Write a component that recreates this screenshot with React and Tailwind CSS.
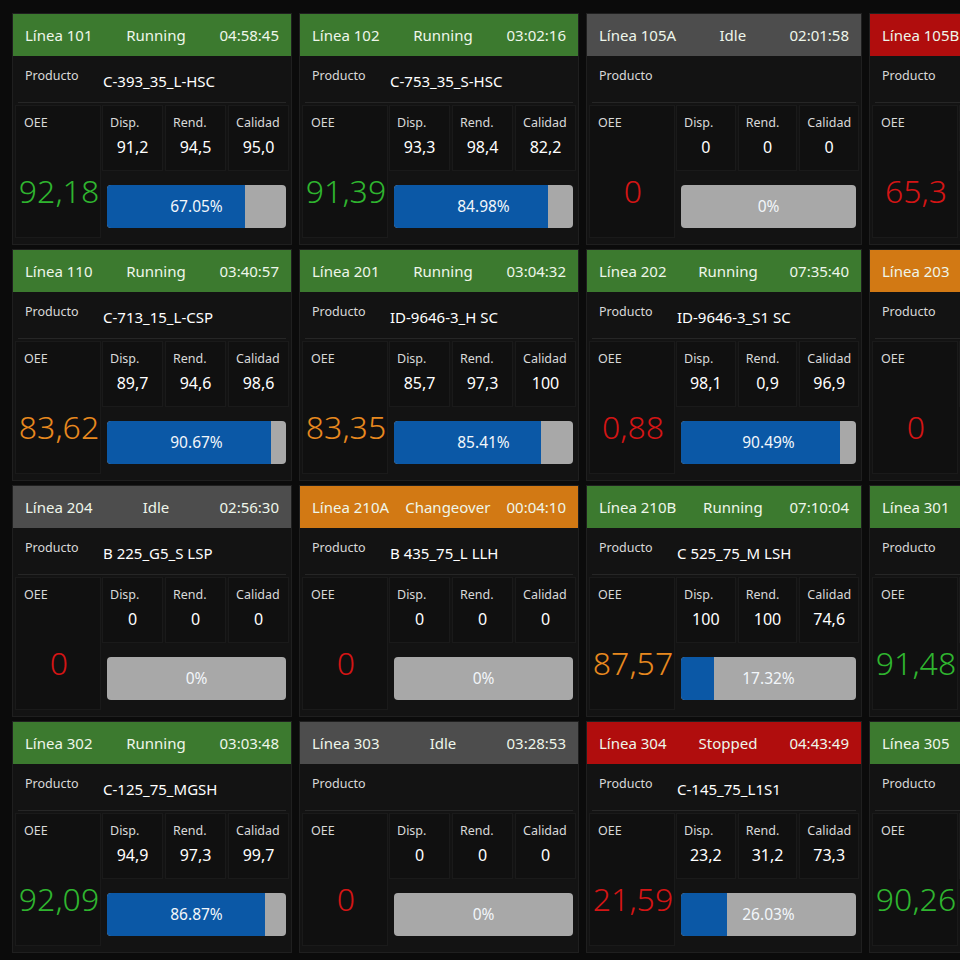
import React from "react";

const HEADER = {
  Running: "bg-[#3c7a2f]",
  Idle: "bg-[#4d4d4d]",
  Changeover: "bg-[#d27914]",
  Stopped: "bg-[#b00d0d]",
};

const OEE_COLOR = {
  green: "text-[#2fb52f]",
  orange: "text-[#e8891f]",
  red: "text-[#d41515]",
};

const lines = [
  { name: "Línea 101", status: "Running", time: "04:58:45", product: "C-393_35_L-HSC", disp: "91,2", rend: "94,5", cal: "95,0", oee: "92,18", color: "green", pct: "67.05%", fill: 0.77 },
  { name: "Línea 102", status: "Running", time: "03:02:16", product: "C-753_35_S-HSC", disp: "93,3", rend: "98,4", cal: "82,2", oee: "91,39", color: "green", pct: "84.98%", fill: 0.86 },
  { name: "Línea 105A", status: "Idle", time: "02:01:58", product: "", disp: "0", rend: "0", cal: "0", oee: "0", color: "red", pct: "0%", fill: 0 },
  { name: "Línea 105B", status: "Stopped", time: "01:12:07", product: "C-210_35_L-HSC", disp: "71,4", rend: "92,3", cal: "99,1", oee: "65,3", color: "red", pct: "48.20%", fill: 0.5 },

  { name: "Línea 110", status: "Running", time: "03:40:57", product: "C-713_15_L-CSP", disp: "89,7", rend: "94,6", cal: "98,6", oee: "83,62", color: "orange", pct: "90.67%", fill: 0.915 },
  { name: "Línea 201", status: "Running", time: "03:04:32", product: "ID-9646-3_H SC", disp: "85,7", rend: "97,3", cal: "100", oee: "83,35", color: "orange", pct: "85.41%", fill: 0.82 },
  { name: "Línea 202", status: "Running", time: "07:35:40", product: "ID-9646-3_S1 SC", disp: "98,1", rend: "0,9", cal: "96,9", oee: "0,88", color: "red", pct: "90.49%", fill: 0.907 },
  { name: "Línea 203", status: "Changeover", time: "00:21:33", product: "B 435_75_L LLH", disp: "0", rend: "0", cal: "0", oee: "0", color: "red", pct: "0%", fill: 0 },

  { name: "Línea 204", status: "Idle", time: "02:56:30", product: "B 225_G5_S LSP", disp: "0", rend: "0", cal: "0", oee: "0", color: "red", pct: "0%", fill: 0 },
  { name: "Línea 210A", status: "Changeover", time: "00:04:10", product: "B 435_75_L LLH", disp: "0", rend: "0", cal: "0", oee: "0", color: "red", pct: "0%", fill: 0 },
  { name: "Línea 210B", status: "Running", time: "07:10:04", product: "C 525_75_M LSH", disp: "100", rend: "100", cal: "74,6", oee: "87,57", color: "orange", pct: "17.32%", fill: 0.19 },
  { name: "Línea 301", status: "Running", time: "05:44:12", product: "C-125_75_MGSH", disp: "96,2", rend: "97,1", cal: "98,0", oee: "91,48", color: "green", pct: "72.10%", fill: 0.75 },

  { name: "Línea 302", status: "Running", time: "03:03:48", product: "C-125_75_MGSH", disp: "94,9", rend: "97,3", cal: "99,7", oee: "92,09", color: "green", pct: "86.87%", fill: 0.88 },
  { name: "Línea 303", status: "Idle", time: "03:28:53", product: "", disp: "0", rend: "0", cal: "0", oee: "0", color: "red", pct: "0%", fill: 0 },
  { name: "Línea 304", status: "Stopped", time: "04:43:49", product: "C-145_75_L1S1", disp: "23,2", rend: "31,2", cal: "73,3", oee: "21,59", color: "red", pct: "26.03%", fill: 0.26 },
  { name: "Línea 305", status: "Running", time: "06:02:19", product: "(C-145_75_L1S1)", disp: "93,0", rend: "97,8", cal: "99,5", oee: "90,26", color: "green", pct: "80.40%", fill: 0.82 },
];

function Metric({ label, value }) {
  return (
    <div className="flex-1 h-[66px] bg-[#101010] border border-[#1a1a1a] pt-[9px] pl-[7px] pr-[3px]">
      <div className="text-[12.5px] leading-[16px] text-[#d9d9d9] whitespace-nowrap">{label}</div>
      <div className="text-[16px] leading-[22px] text-white text-center mt-[5px] pr-[4px]">{value}</div>
    </div>
  );
}

function LineCard({ line }) {
  return (
    <div className="h-[232px] flex flex-col bg-[#131313] border border-[#1f1f1f]">
      {/* Header */}
      <div
        className={`h-[42px] shrink-0 flex items-center justify-between px-[12px] text-[15px] text-[#eef6ea] whitespace-nowrap ${HEADER[line.status]}`}
      >
        <span>{line.name}</span>
        <span>{line.status}</span>
        <span>{line.time}</span>
      </div>

      <div className="flex-1 flex flex-col px-[2px] pb-[6px]">
        {/* Product */}
        <div className="h-[47px] mx-[3px] flex border-b border-[#262626]">
          <div className="w-[85px] shrink-0 pl-[7px] pt-[11px] text-[12.5px] text-[#d9d9d9]">Producto</div>
          <div className="pt-[14px] text-[15px] text-white whitespace-nowrap">{line.product}</div>
        </div>

        {/* Metrics */}
        <div className="flex-1 flex pt-[2px]">
          <div className="w-[86px] shrink-0 flex flex-col bg-[#101010] border border-[#1a1a1a] pl-[8px] pt-[9px]">
            <div className="text-[12.5px] leading-[16px] text-[#d9d9d9]">OEE</div>
            <div className={`flex-1 flex items-center justify-center pr-[6px] pt-[20px] pb-[6px] text-[32px] font-light ${OEE_COLOR[line.color]}`}>
              {line.oee}
            </div>
          </div>
          <div className="flex-1 flex flex-col pl-[1px]">
            <div className="flex gap-[2px]">
              <Metric label="Disp." value={line.disp} />
              <Metric label="Rend." value={line.rend} />
              <Metric label="Calidad" value={line.cal} />
            </div>
            <div className="relative mt-[14px] ml-[5px] mr-[3px] h-[43px] rounded-[4px] overflow-hidden bg-[#a8a8a8]">
              <div className="absolute inset-y-0 left-0 bg-[#0b58a6]" style={{ width: `${line.fill * 100}%` }} />
              <div className="relative h-full flex items-center justify-center text-[15.5px] text-[#f2f6fa]">{line.pct}</div>
            </div>
          </div>
        </div>
      </div>
    </div>
  );
}

export default function App() {
  return (
    <div
      className="w-[960px] h-[960px] overflow-hidden bg-[#0b0b0b] pl-[12px] pt-[13px]"
      style={{ fontFamily: '"Noto Sans", "Open Sans", sans-serif' }}
    >
      <div className="grid grid-cols-[280px_280px_276px_280px] gap-x-[7px] gap-y-[4px] w-max">
        {lines.map((line) => (
          <LineCard key={line.name} line={line} />
        ))}
      </div>
    </div>
  );
}
